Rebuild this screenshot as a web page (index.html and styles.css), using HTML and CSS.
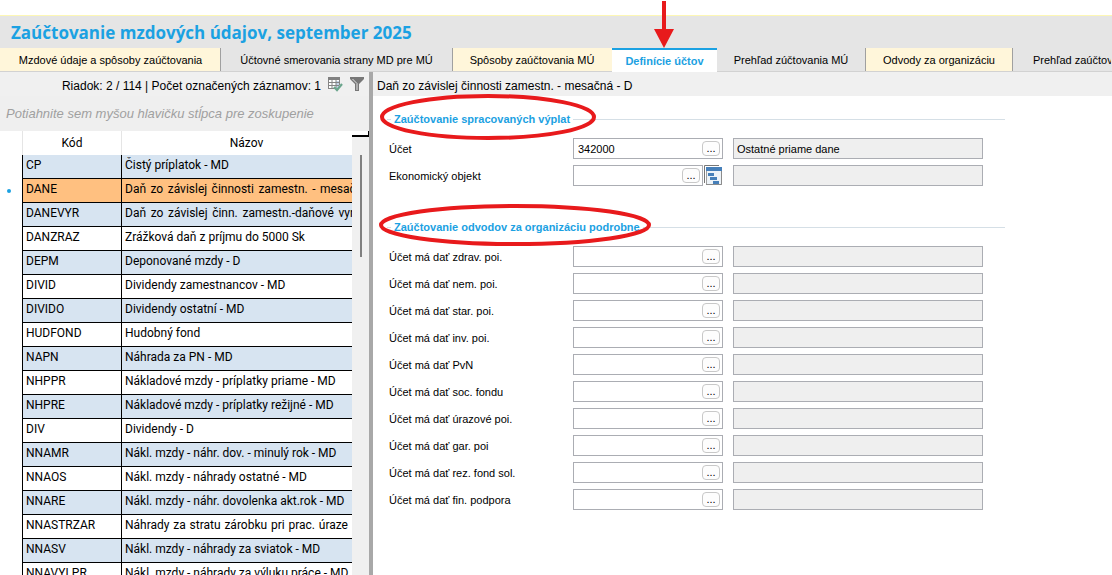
FILE: index.html
```html
<!DOCTYPE html>
<html lang="sk">
<head>
<meta charset="utf-8">
<title>Zaúčtovanie mzdových údajov</title>
<link rel="stylesheet" href="styles.css">
</head>
<body>
<header class="header">
  <h1 class="title">Zaúčtovanie mzdových údajov, september 2025</h1>
</header>
<nav class="tabs">
  <button class="tab tab-cream tab-xl">Mzdové údaje a spôsoby zaúčtovania</button>
  <button class="tab tab-xxl">Účtovné smerovania strany MD pre MÚ</button>
  <button class="tab tab-cream tab-edge tab-l">Spôsoby zaúčtovania MÚ</button>
  <button class="tab tab-active tab-s">Definície účtov
    <svg class="arrow" width="22" height="48" viewBox="0 0 22 48" aria-hidden="true"><path d="M9 1h4v28h8L11 48 1 29h8z" fill="#e81a1c"/></svg>
  </button>
  <button class="tab tab-m">Prehľad zúčtovania MÚ</button>
  <button class="tab tab-cream tab-edge tab-m tab-end">Odvody za organizáciu</button>
  <button class="tab tab-rest">Prehľad zaúčtovania</button>
</nav>
<main class="main">
  <section class="list">
    <div class="toolbar">
      <span>Riadok: 2 / 114 | Počet označených záznamov: 1</span>
      <button class="tool" aria-label="Označené záznamy">
        <svg width="16" height="16" viewBox="0 0 16 16"><path d="M1 2h12v11H1z" fill="#fff"/><path d="M9 5h3v8H9z" fill="#c5d5e8"/><path d="M1.500 2v11M5 3v10M9 3v9M1 6.500h12M1 9.500h11M1 12.500h7M12.500 2v7" stroke="#858585" fill="none"/><path d="M1 1h12v3H1z" fill="#808080"/><path d="M7 11l3 3 5-6" stroke="#6aa58c" stroke-width="2.200" fill="none"/></svg>
      </button>
      <button class="tool" aria-label="Filter">
        <svg width="16" height="16" viewBox="0 0 16 16"><path d="M1 1h14v2l-5 5v7H6V8L1 3z" fill="#777"/><path d="M3.500 3L8 7.500V14" stroke="#e8e8e8" fill="none"/></svg>
      </button>
    </div>
    <div class="grouping">Potiahnite sem myšou hlavičku stĺpca pre zoskupenie</div>
    <div class="grid">
      <div class="grid-view">
        <table class="table">
          <colgroup><col class="col-mark"><col class="col-code"><col></colgroup>
          <thead><tr><td></td><th>Kód</th><th>Názov</th></tr></thead>
          <tbody>
            <tr><td></td><td>CP</td><td>Čistý príplatok - MD</td></tr>
            <tr class="current"><td><i class="dot"></i></td><td>DANE</td><td><div class="spread spread-wide">Daň zo závislej činnosti zamestn. - mesačná</div></td></tr>
            <tr><td></td><td>DANEVYR</td><td><div class="spread spread-wide">Daň zo závislej činn. zamestn.-daňové vyrov.</div></td></tr>
            <tr><td></td><td>DANZRAZ</td><td>Zrážková daň z príjmu do 5000 Sk</td></tr>
            <tr><td></td><td>DEPM</td><td>Deponované mzdy - D</td></tr>
            <tr><td></td><td>DIVID</td><td>Dividendy zamestnancov - MD</td></tr>
            <tr><td></td><td>DIVIDO</td><td>Dividendy ostatní - MD</td></tr>
            <tr><td></td><td>HUDFOND</td><td>Hudobný fond</td></tr>
            <tr><td></td><td>NAPN</td><td>Náhrada za PN - MD</td></tr>
            <tr><td></td><td>NHPPR</td><td>Nákladové mzdy - príplatky priame - MD</td></tr>
            <tr><td></td><td>NHPRE</td><td>Nákladové mzdy - príplatky režijné - MD</td></tr>
            <tr><td></td><td>DIV</td><td>Dividendy - D</td></tr>
            <tr><td></td><td>NNAMR</td><td>Nákl. mzdy - náhr. dov. - minulý rok - MD</td></tr>
            <tr><td></td><td>NNAOS</td><td>Nákl. mzdy - náhrady ostatné - MD</td></tr>
            <tr><td></td><td>NNARE</td><td>Nákl. mzdy - náhr. dovolenka akt.rok - MD</td></tr>
            <tr><td></td><td>NNASTRZAR</td><td><div class="spread">Náhrady za stratu zárobku pri prac. úraze</div></td></tr>
            <tr><td></td><td>NNASV</td><td>Nákl. mzdy - náhrady za sviatok - MD</td></tr>
            <tr><td></td><td>NNAVYLPR</td><td>Nákl. mzdy - náhrady za výluku práce - MD</td></tr>
          </tbody>
        </table>
      </div>
      <div class="scroll"><div class="corner"></div><div class="thumb"></div></div>
    </div>
  </section>
  <section class="detail">
    <div class="detail-title">Daň zo závislej činnosti zamestn. - mesačná - D</div>
    <form class="form">
      <section class="group">
        <h2 class="legend">Zaúčtovanie spracovaných výplat
          <svg class="ring" width="218" height="46" viewBox="0 0 218 46" aria-hidden="true"><ellipse cx="109" cy="23" rx="106" ry="21" fill="none" stroke="#e81a1c" stroke-width="4"/></svg>
        </h2>
        <div class="row"><label for="f1">Účet</label><div class="pick"><input id="f1" value="342000"><button type="button" class="more">...</button></div><input class="desc" readonly aria-label="Názov účtu" value="Ostatné priame dane"></div>
        <div class="row"><label for="f2">Ekonomický objekt</label><div class="with-tree"><div class="pick"><input id="f2"><button type="button" class="more">...</button></div><button type="button" class="tree" aria-label="Strom objektov"><svg width="19" height="21" viewBox="0 0 19 21"><path d="M0.500 18V0.500H15" stroke="#777" fill="none"/><path d="M2.500 2.500h15v17h-15z" fill="#edf3f8" stroke="#a0a0a0"/><path d="M17.500 6v13.500H2" stroke="#8c8c8c" fill="none"/><path d="M2 2h16v4H2zM4 8h6v3H4zM6 12h7v3H6zM9 16h6v3H9z" fill="#467fb9"/></svg></button></div><input class="desc" readonly aria-label="Názov objektu"></div>
      </section>
      <section class="group">
        <h2 class="legend">Zaúčtovanie odvodov za organizáciu podrobne
          <svg class="ring" width="272" height="42" viewBox="0 0 272 42" aria-hidden="true"><ellipse cx="136" cy="21" rx="134" ry="19" fill="none" stroke="#e81a1c" stroke-width="4"/></svg>
        </h2>
        <div class="row"><label for="g1">Účet má dať zdrav. poi.</label><div class="pick"><input id="g1"><button type="button" class="more">...</button></div><input class="desc" readonly aria-label="Názov účtu"></div>
        <div class="row"><label for="g2">Účet má dať nem. poi.</label><div class="pick"><input id="g2"><button type="button" class="more">...</button></div><input class="desc" readonly aria-label="Názov účtu"></div>
        <div class="row"><label for="g3">Účet má dať star. poi.</label><div class="pick"><input id="g3"><button type="button" class="more">...</button></div><input class="desc" readonly aria-label="Názov účtu"></div>
        <div class="row"><label for="g4">Účet má dať inv. poi.</label><div class="pick"><input id="g4"><button type="button" class="more">...</button></div><input class="desc" readonly aria-label="Názov účtu"></div>
        <div class="row"><label for="g5">Účet má dať PvN</label><div class="pick"><input id="g5"><button type="button" class="more">...</button></div><input class="desc" readonly aria-label="Názov účtu"></div>
        <div class="row"><label for="g6">Účet má dať soc. fondu</label><div class="pick"><input id="g6"><button type="button" class="more">...</button></div><input class="desc" readonly aria-label="Názov účtu"></div>
        <div class="row"><label for="g7">Účet má dať úrazové poi.</label><div class="pick"><input id="g7"><button type="button" class="more">...</button></div><input class="desc" readonly aria-label="Názov účtu"></div>
        <div class="row"><label for="g8">Účet má dať gar. poi</label><div class="pick"><input id="g8"><button type="button" class="more">...</button></div><input class="desc" readonly aria-label="Názov účtu"></div>
        <div class="row"><label for="g9">Účet má dať rez. fond sol.</label><div class="pick"><input id="g9"><button type="button" class="more">...</button></div><input class="desc" readonly aria-label="Názov účtu"></div>
        <div class="row"><label for="g10">Účet má dať fin. podpora</label><div class="pick"><input id="g10"><button type="button" class="more">...</button></div><input class="desc" readonly aria-label="Názov účtu"></div>
      </section>
    </form>
  </section>
</main>
</body>
</html>
```

FILE: styles.css
```css
* { box-sizing: border-box; }
html, body { height: 100%; }
body {
  margin: 0;
  padding-top: 15px;
  display: flex;
  flex-direction: column;
  overflow: hidden;
  background: #fff;
  color: #000;
  font: 11px/16px "Liberation Sans", Arial, sans-serif;
}
button, input { font: inherit; color: inherit; border: 0; margin: 0; padding: 0; background: none; }
svg { display: block; }

.header { flex: none; border-top: 1px solid #fdf7b5; background: #e5e5e5; }
.title { margin: 0; padding: 5px 11px 3px; font: bold 17px/24px "Open Sans", "Noto Sans", sans-serif; color: #1ba1e2; }

.tabs { flex: none; display: flex; height: 24px; background: #e5e5e5; border-bottom: 1px solid #d2d2d2; }
.tab { position: relative; flex: none; height: 23px; white-space: nowrap; border-right: 1px solid transparent; border-left: 1px solid transparent; }
.tab-cream { background: #fff6da; border-right-color: #fff6da; }
.tab-cream.tab-xl, .tab-cream.tab-end { border-right-color: #a0a0a0; }
.tab-edge { border-left-color: #a0a0a0; }
.tab-active { height: 24px; background: #fff; border: 0; border-top: 2px solid #1ba1e2; color: #1ba1e2; font-weight: bold; }
.tab-s { width: 105px; }
.tab-m { width: 148px; }
.tab-l { width: 160px; }
.tab-xl { width: 221px; }
.tab-xxl { width: 231px; }
.tab-rest { flex: 1; min-width: 0; padding-left: 19px; overflow: hidden; text-align: left; }
.arrow { position: absolute; left: 41px; bottom: 22px; z-index: 2; }
.tab-active .arrow { bottom: 24px; left: 41px; }

.main { flex: 1; min-height: 0; display: flex; }
.list { flex: none; width: 373px; display: flex; flex-direction: column; border-right: 4px solid #a8a8a8; }
.toolbar { flex: none; height: 24px; padding: 4px 4px 0 0; display: flex; justify-content: flex-end; gap: 6px; font-size: 12px; line-height: 20px; background: #f0f0f0; }
.tool { height: 16px; }
.grouping { flex: none; height: 35px; padding: 8px 6px; font-style: italic; font-size: 13px; line-height: 20px; white-space: nowrap; color: #a0a0a0; background: #efefef; }
.grid { flex: 1; min-height: 0; display: flex; }
.grid-view { flex: 1; min-width: 0; overflow: hidden; }
.scroll { flex: none; width: 17px; background: #f0f0f0; }
.corner { height: 6px; background: #fff; border-bottom: 2px solid #000; border-right: 1px solid #000; }
.thumb { width: 2px; height: 102px; margin: 18px 0 0 8px; background: #808080; }

.table { width: calc(100% + 19px); table-layout: fixed; border-collapse: separate; border-spacing: 0; font: 12px/20px Roboto, "Open Sans", sans-serif; }
.col-mark { width: 22px; }
.col-code { width: 99px; }
.table th { height: 24px; padding: 0; font-weight: normal; border-left: 1px solid #e5e5e5; }
.table tbody td { height: 24px; padding: 0 0 3px 3px; white-space: nowrap; overflow: hidden; border-left: 1px solid #000; border-bottom: 1px solid #000; }
.table tbody td:first-child { padding: 0; border: 0; }
.table tbody tr:nth-child(odd) td:not(:first-child) { background: #d7e4f1; }
.table tbody tr.current td:not(:first-child) { background: #ffc080; }
.dot { display: block; width: 4px; height: 4px; margin: 0 7px; border-radius: 2px; background: #1ba1e2; }
.spread { width: 223px; white-space: nowrap; text-align: justify; text-align-last: justify; height: 20px; }
.spread-wide { width: 244px; }

.detail { flex: 1; min-width: 0; }
.detail-title { height: 24px; padding: 4px 4px 0; font-size: 12px; line-height: 20px; background: #f0f0f0; }
.form { padding: 15px 14px 0; }
.group { max-width: 618px; margin-bottom: 33px; }
.legend { position: relative; display: flex; align-items: center; gap: 3px; margin: 0 0 11px; font-size: 11px; line-height: 16px; color: #1ba1e2; white-space: nowrap; }
.legend::before, .legend::after { content: ""; height: 1px; background: #d5dfe6; }
.legend::before { width: 4px; }
.legend::after { flex: 1; }
.ring { position: absolute; left: -8px; top: 6px; transform: translateY(-50%); }
.row { display: grid; grid-template-columns: 184px 150px 260px; height: 21px; margin: 0 0 6px 2px; align-items: center; }
.row input { width: 100%; height: 21px; padding: 0 4px; border: 1px solid #abadb3; }
.row .desc { width: 250px; margin-left: 10px; padding: 0 3px; background: #efefef; }
.pick { position: relative; flex: 1; }
.more { position: absolute; right: 3px; top: 3px; width: 18px; height: 15px; line-height: 13px; border: 1px solid #c8c8c8; border-radius: 4px; background: #fdfdfd; }
.with-tree { display: flex; gap: 1px; }
.tree { width: 19px; height: 21px; }
```
